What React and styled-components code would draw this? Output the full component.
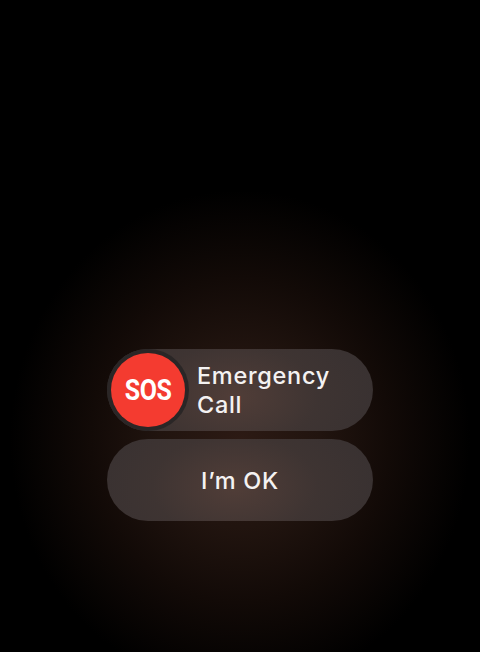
import React from "react";
import styled, { createGlobalStyle } from "styled-components";

const Global = createGlobalStyle`
  html, body { margin: 0; padding: 0; background: #000; }
  body { width: 480px; height: 652px; overflow: hidden; }
`;

const Screen = styled.div`
  width: 480px;
  height: 652px;
  box-sizing: border-box;
  padding-top: 349px;
  display: flex;
  flex-direction: column;
  align-items: center;
  gap: 8px;
  background:
    radial-gradient(ellipse 230px 250px at 240px 440px, #2c1a14 0%, #21140f 35%, #120a07 65%, rgba(0, 0, 0, 0) 100%),
    #000;
  font-family: Inter, "Noto Sans", sans-serif;
`;

const Pill = styled.button`
  all: unset;
  box-sizing: border-box;
  width: 266px;
  height: 82px;
  border-radius: 41px;
  display: flex;
  align-items: center;
  justify-content: ${(p) => (p.$centered ? "center" : "flex-start")};
  padding: 4px;
  gap: 12px;
  color: #fff;
  background:
    radial-gradient(ellipse 150px 95px at 48% 58%, rgba(82, 62, 56, 0.95) 0%, rgba(66, 54, 51, 0.6) 55%, rgba(56, 50, 49, 0) 100%),
    #383131;
`;

const SosKnob = styled.div`
  width: 74px;
  height: 74px;
  border-radius: 50%;
  flex: none;
  background: #f43b30;
  box-shadow: 0 0 0 4px #2a2626;
  display: flex;
  align-items: center;
  justify-content: center;
`;

const SosText = styled.span`
  font-family: Roboto, "Liberation Sans", sans-serif;
  font-weight: 700;
  font-size: 29px;
  color: #fff;
  letter-spacing: -0.5px;
  transform: scaleX(0.86);
  display: inline-block;
`;

const Label = styled.span`
  font-size: 23.5px;
  font-weight: 500;
  line-height: 29px;
  letter-spacing: 0.7px;
  color: #f4f2f2;
`;

export default function App() {
  return (
    <>
      <Global />
      <Screen>
        <Pill>
          <SosKnob>
            <SosText>SOS</SosText>
          </SosKnob>
          <Label>
            Emergency
            <br />
            Call
          </Label>
        </Pill>
        <Pill $centered>
          <Label>I’m OK</Label>
        </Pill>
      </Screen>
    </>
  );
}
